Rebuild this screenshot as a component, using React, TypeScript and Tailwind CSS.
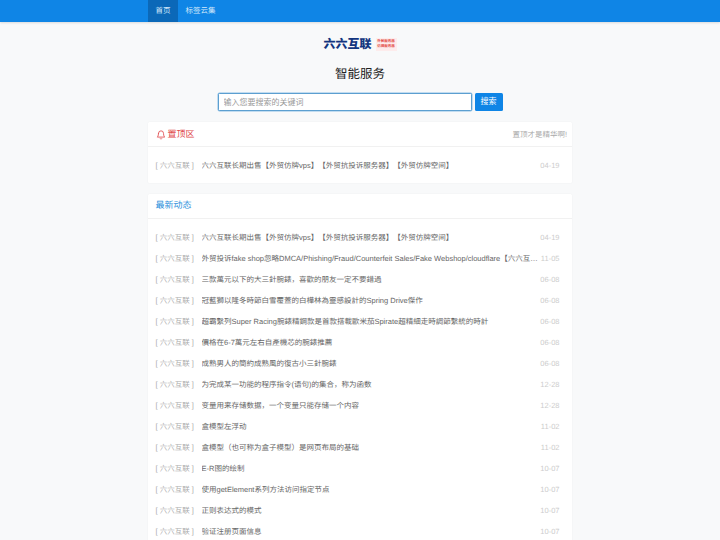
const sans = "font-['Liberation_Sans','Noto_Sans_CJK_SC',sans-serif]";

const rows: [string, string][] = [
  ["六六互联长期出售【外贸仿牌vps】【外贸抗投诉服务器】【外贸仿牌空间】", "04-19"],
  ["外贸投诉fake shop忽略DMCA/Phishing/Fraud/Counterfeit Sales/Fake Webshop/cloudflare【六六互联】外贸抗投诉服务器", "11-05"],
  ["三款萬元以下的大三針腕錶，喜歡的朋友一定不要錯過", "06-08"],
  ["冠藍獅以隆冬時節白雪覆蓋的白樺林為靈感設計的Spring Drive傑作", "06-08"],
  ["超霸繫列Super Racing腕錶精鋼款是首款搭載歐米茄Spirate超精細走時調節繫統的時計", "06-08"],
  ["價格在6-7萬元左右自產機芯的腕錶推薦", "06-08"],
  ["成熟男人的簡約成熟風的復古小三針腕錶", "06-08"],
  ["为完成某一功能的程序指令(语句)的集合，称为函数", "12-28"],
  ["变量用来存储数据，一个变量只能存储一个内容", "12-28"],
  ["盒模型左浮动", "11-02"],
  ["盒模型（也可称为盒子模型）是网页布局的基础", "11-02"],
  ["E-R图的绘制", "10-07"],
  ["使用getElement系列方法访问指定节点", "10-07"],
  ["正则表达式的模式", "10-07"],
  ["验证注册页面信息", "10-07"],
];

function Row({ title, date }: { title: string; date: string }) {
  return (
    <div className="flex h-[21px] items-center text-[7.5px] leading-[21px] [text-spacing-trim:space-all]">
      <span className="w-[46px] shrink-0 whitespace-pre text-[#aaaaaa]">[ 六六互联 ]</span>
      <span className="min-w-0 flex-1 truncate text-[#666666]">{title}</span>
      <span className="w-[21px] shrink-0 text-right text-[#cccccc]">{date}</span>
    </div>
  );
}

export default function App() {
  return (
    <div className={`${sans} h-[540px] overflow-hidden bg-[#f8f9fa] [text-rendering:geometricPrecision]`}>
      <nav className="h-[22px] bg-[#0f85e6] shadow-[0_1px_2px_rgba(0,0,0,0.12)]">
        <div className="mx-auto flex h-full w-[424px] text-[7.5px] leading-[22px] text-[#d5e9fb]">
          <a className="bg-[#0b68b8] px-[7.5px] text-[#d5e9fb]">首页</a>
          <a className="px-[7.5px]">标签云集</a>
        </div>
      </nav>

      <header className="flex flex-col items-center pt-[14px]">
        <div className="flex h-[16px] items-center gap-[4px]">
          <span className="font-['Noto_Sans_CJK_SC',sans-serif] text-[12px] leading-none font-black whitespace-nowrap text-[#12357f]">六六互联</span>
          <span className="flex h-[13px] w-[21px] flex-col items-center justify-center bg-[#fdecec] text-[3.5px] leading-[5px] font-bold whitespace-nowrap text-[#e2453f]">
            <span>外贸服务器</span>
            <span>仿牌服务器</span>
          </span>
        </div>
        <h1 className="mt-[12px] text-[12.5px] leading-[20px] font-normal text-[#222222]">智能服务</h1>
        <div className="mt-[9px] flex gap-[3px]">
          <input
            readOnly
            placeholder="输入您要搜索的关键词"
            className="h-[18px] w-[254px] rounded-[1.5px] border border-[#5c9fd0] bg-white px-[5px] text-[8px] shadow-[0_0_0_0.5px_#8cc0e6] outline-none placeholder:text-[#999999]"
          />
          <button className="h-[18px] w-[28px] rounded-[1.5px] bg-[#0f85e6] text-[8px] text-white">搜索</button>
        </div>
      </header>

      <main className="mx-auto mt-[11px] flex w-[424px] flex-col gap-[10.5px]">
        <section className="rounded-[1.5px] bg-white shadow-[0_0_2px_rgba(0,0,0,0.05)]">
          <div className="flex h-[25px] items-center justify-between border-b border-[#f1f1f1] pt-[1px] pr-[5px] pl-[7.5px]">
            <span className="flex items-center gap-[2px] text-[9px] text-[#e0484a]">
              <svg width="10" height="10" viewBox="0 0 24 24" fill="none" stroke="currentColor" strokeWidth="2" strokeLinecap="round" strokeLinejoin="round">
                <path d="M6 8a6 6 0 0 1 12 0c0 7 3 9 3 9H3s3-2 3-9" />
                <path d="M10.3 21a1.94 1.94 0 0 0 3.4 0" />
              </svg>
              置顶区
            </span>
            <span className="text-[7.5px] text-[#aaaaaa]">置顶才是精华啊!</span>
          </div>
          <div className="py-[7.5px] pr-[12.5px] pl-[7.5px]">
            <Row title={rows[0][0]} date={rows[0][1]} />
          </div>
        </section>

        <section className="rounded-[1.5px] bg-white shadow-[0_0_2px_rgba(0,0,0,0.05)]">
          <div className="flex h-[25px] items-center border-b border-[#f1f1f1] px-[7.5px] pt-[1px] text-[9px] text-[#2b8fdb]">最新动态</div>
          <div className="pt-[8px] pr-[12.5px] pl-[7.5px]">
            {rows.map(([t, d], i) => (
              <Row key={i} title={t} date={d} />
            ))}
          </div>
        </section>
      </main>
    </div>
  );
}
